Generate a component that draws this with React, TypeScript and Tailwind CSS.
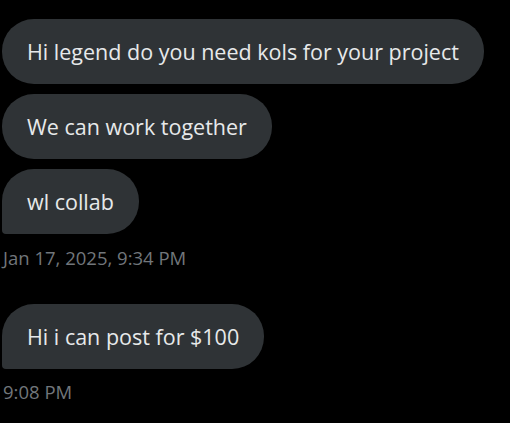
export default function App() {
  const font = { fontFamily: '"Open Sans", "Noto Sans", sans-serif' };
  return (
    <div className="min-h-[423px] w-[510px] bg-black pl-[2px] pt-[19px]" style={font}>
      <div className="flex flex-col items-start gap-[10px]">
        <div className="rounded-[32px] bg-[#2f3336] px-[25px] py-[19px] text-[21.5px] leading-[27px] text-[#e7e9ea]">
          Hi legend do you need kols for your project
        </div>
        <div className="rounded-[32px] bg-[#2f3336] px-[25px] py-[19px] text-[21.5px] leading-[27px] text-[#e7e9ea]">
          We can work together
        </div>
        <div className="rounded-[32px] rounded-bl-[4px] bg-[#2f3336] px-[25px] py-[19px] text-[21.5px] leading-[27px] text-[#e7e9ea]">
          wl collab
        </div>
      </div>
      <div className="mt-[12px] pl-[1px] text-[18.5px] leading-[24px] text-[#71767b]">Jan 17, 2025, 9:34 PM</div>
      <div className="mt-[34px] flex flex-col items-start">
        <div className="rounded-[32px] rounded-bl-[4px] bg-[#2f3336] px-[25px] py-[19px] text-[21.5px] leading-[27px] text-[#e7e9ea]">
          Hi i can post for $100
        </div>
      </div>
      <div className="mt-[11px] pl-[1px] text-[18.5px] leading-[24px] text-[#71767b]">9:08 PM</div>
    </div>
  );
}
